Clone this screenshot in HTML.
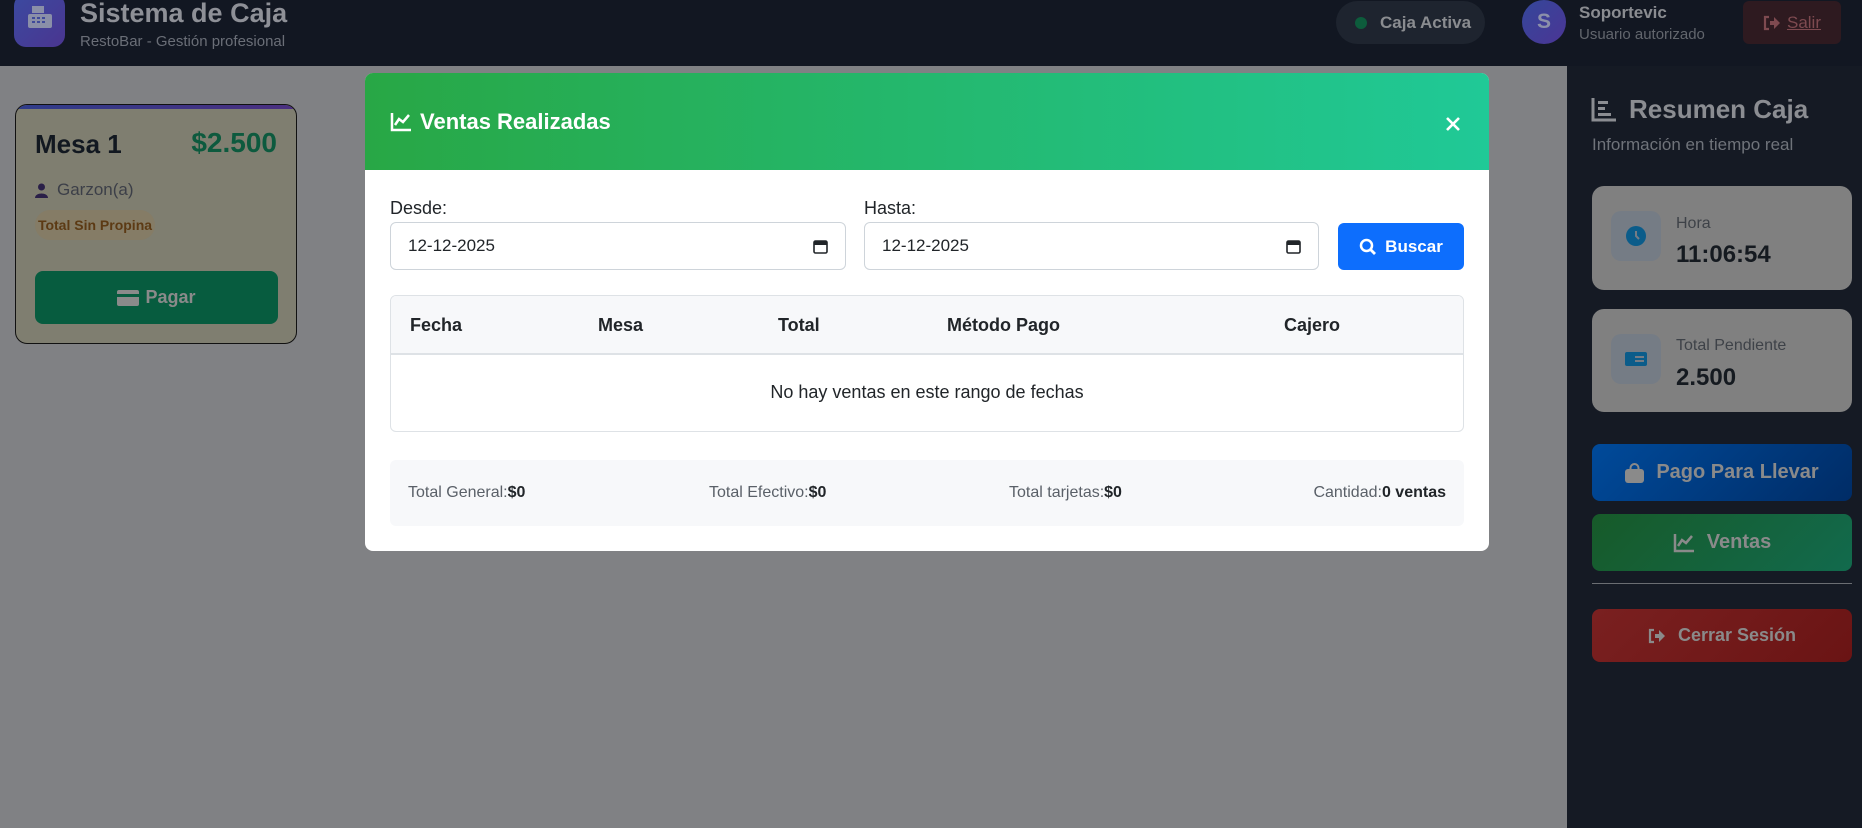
<!DOCTYPE html>
<html><head><meta charset="utf-8"><style>
*{box-sizing:border-box;margin:0;padding:0}
body{width:1862px;height:828px;overflow:hidden;background:#808184;font-family:"Liberation Sans",sans-serif;position:relative}
.abs{position:absolute}
.hdr{left:0;top:0;width:1862px;height:66px;background:#121722}
.logo{left:14px;top:-6px;width:51px;height:53px;border-radius:12px;background:linear-gradient(135deg,#3b4aa0,#4a3590)}
.side{left:1567px;top:66px;width:295px;height:762px;background:#151a24}
.card{border-radius:12px}
.btn{border-radius:8px;color:#8a8a8a;font-weight:bold;font-size:20px;display:flex;align-items:center;justify-content:center;gap:12px}
.modal{left:365px;top:73px;width:1124px;height:478px;background:#fff;border-radius:8px;overflow:hidden}
.mh{height:97px;background:linear-gradient(90deg,#28a745,#20c997);color:#fff}
.inp{border:1px solid #ced4da;border-radius:6px;height:48px;font-size:17px;color:#212529;padding-left:17px;display:flex;align-items:center}
</style></head><body>
<div class="abs hdr"></div>
<div class="abs logo"><svg width="51" height="53" viewBox="0 0 51 53"><rect x="14" y="20" width="24" height="14" rx="2" fill="#8a8fa8"/><rect x="18" y="12" width="12" height="7" fill="#8a8fa8"/><g fill="#3f4a9a"><rect x="18" y="23" width="3" height="2"/><rect x="23" y="23" width="3" height="2"/><rect x="28" y="23" width="3" height="2"/><rect x="18" y="27" width="3" height="2"/><rect x="23" y="27" width="3" height="2"/><rect x="28" y="27" width="3" height="2"/></g></svg></div>
<div class="abs" style="left:80px;top:-2px;font-size:27px;font-weight:bold;color:#8e9097">Sistema de Caja</div>
<div class="abs" style="left:80px;top:33px;font-size:15px;color:#6a6e77">RestoBar - Gestión profesional</div>
<div class="abs" style="left:1336px;top:1px;width:149px;height:43px;border-radius:22px;background:#1e242f;color:#8a8c90;font-weight:bold;font-size:17px;display:flex;align-items:center;padding-left:19px;gap:13px"><span style="width:12px;height:12px;border-radius:50%;background:#0d5c3c"></span>Caja Activa</div>
<div class="abs" style="left:1522px;top:0px;width:44px;height:44px;border-radius:50%;background:linear-gradient(135deg,#34479a,#4b3595);color:#8b90aa;font-weight:bold;font-size:21px;display:flex;align-items:center;justify-content:center">S</div>
<div class="abs" style="left:1579px;top:3px;font-size:17px;font-weight:bold;color:#8a8c91">Soportevic</div>
<div class="abs" style="left:1579px;top:26px;font-size:15px;color:#62666d">Usuario autorizado</div>
<div class="abs" style="left:1743px;top:1px;width:98px;height:43px;border-radius:6px;background:#2e1a20;color:#7e4a50;font-size:17px;display:flex;align-items:center;justify-content:center;gap:6px"><svg width="18" height="16" viewBox="0 0 18 16"><path d="M6 2H2V14H6" stroke="#7e4a50" stroke-width="2.2" fill="none"/><path d="M7 6H11V2L17 8L11 14V10H7Z" fill="#7e4a50"/></svg><u>Salir</u></div>

<!-- mesa card -->
<div class="abs card" style="left:15px;top:104px;width:282px;height:240px;background:#7f7e70;border:1.5px solid #111;overflow:hidden">
<div style="height:4px;background:linear-gradient(90deg,#2f3c8a,#4b2f80)"></div>
<div class="abs" style="left:19px;top:24px;font-size:26px;font-weight:bold;color:#121820">Mesa 1</div>
<div class="abs" style="right:19px;top:22px;font-size:28px;font-weight:bold;color:#0d5a3e">$2.500</div>
<div class="abs" style="left:19px;top:75px;font-size:17px;color:#3c3f48;display:flex;align-items:center;gap:9px"><svg width="13" height="15" viewBox="0 0 13 15"><circle cx="6.5" cy="4" r="3.5" fill="#2a1f48"/><path d="M0 15C0 9 13 9 13 15Z" fill="#2a1f48"/></svg>Garzon(a)</div>
<div class="abs" style="left:19px;top:105px;width:120px;height:30px;border-radius:15px;background:#857c66;color:#5c3a14;font-size:14px;font-weight:bold;display:flex;align-items:center;justify-content:center">Total Sin Propina</div>
<div class="abs btn" style="left:19px;top:166px;width:243px;height:53px;background:#075c3f;font-size:18px;gap:6px"><svg width="22" height="16" viewBox="0 0 22 16"><rect width="22" height="16" rx="2" fill="#8a8a8a"/><rect y="4" width="22" height="3" fill="#075c3f"/></svg>Pagar</div>
</div>

<!-- sidebar -->
<div class="abs side"></div>
<div class="abs" style="left:1591px;top:94px;font-size:26px;font-weight:bold;color:#8b8d92;display:flex;align-items:center;gap:12px"><svg width="26" height="24" viewBox="0 0 26 24"><path d="M2 0V22H25" stroke="#8b8d92" stroke-width="3" fill="none"/><rect x="7" y="3" width="10" height="3" fill="#8b8d92"/><rect x="7" y="9" width="7" height="3" fill="#8b8d92"/><rect x="7" y="15" width="13" height="3" fill="#8b8d92"/></svg>Resumen Caja</div>
<div class="abs" style="left:1592px;top:135px;font-size:17px;color:#6f737a">Información en tiempo real</div>
<div class="abs card" style="left:1592px;top:186px;width:260px;height:104px;background:#808080"></div>
<div class="abs" style="left:1611px;top:211px;width:50px;height:50px;border-radius:10px;background:#757c85"><svg style="margin:15px" width="20" height="20" viewBox="0 0 20 20"><circle cx="10" cy="10" r="10" fill="#0b5c8a"/><path d="M10 5V10L13 13" stroke="#757c85" stroke-width="2" fill="none"/></svg></div>
<div class="abs" style="left:1676px;top:215px;font-size:16px;color:#3e4248">Hora</div>
<div class="abs" style="left:1676px;top:241px;font-size:24px;font-weight:bold;color:#151a20">11:06:54</div>
<div class="abs card" style="left:1592px;top:309px;width:260px;height:103px;background:#808080"></div>
<div class="abs" style="left:1611px;top:334px;width:50px;height:50px;border-radius:10px;background:#757c85"><svg style="margin:18px 14px" width="22" height="14" viewBox="0 0 22 14"><rect width="22" height="14" rx="2" fill="#0b5c8a"/><rect x="10" y="4" width="9" height="2" fill="#757c85"/><rect x="10" y="8" width="9" height="2" fill="#757c85"/></svg></div>
<div class="abs" style="left:1676px;top:337px;font-size:16px;color:#3e4248">Total Pendiente</div>
<div class="abs" style="left:1676px;top:364px;font-size:24px;font-weight:bold;color:#151a20">2.500</div>
<div class="abs btn" style="left:1592px;top:444px;width:260px;height:57px;background:linear-gradient(135deg,#004a9a,#002c66)"><svg width="19" height="20" viewBox="0 0 19 20"><path d="M5.5 7V5A4 4 0 0 1 13.5 5V7" stroke="#8a8a8a" stroke-width="2" fill="none"/><rect y="6" width="19" height="14" rx="3" fill="#8a8a8a"/></svg>Pago Para Llevar</div>
<div class="abs btn" style="left:1592px;top:514px;width:260px;height:57px;background:linear-gradient(135deg,#175a29,#126a4d)"><svg width="22" height="20" viewBox="0 0 22 20"><path d="M2 1V18H21" stroke="#8a8a8a" stroke-width="2.5" fill="none"/><path d="M5 13L9 7L13 10L19 3" stroke="#8a8a8a" stroke-width="2.5" fill="none"/></svg>Ventas</div>
<div class="abs" style="left:1592px;top:583px;width:260px;height:1px;background:#6a6d72"></div>
<div class="abs btn" style="left:1592px;top:609px;width:260px;height:53px;background:linear-gradient(135deg,#7a2020,#6a1414);font-size:18px"><svg width="18" height="16" viewBox="0 0 18 16"><path d="M6 2H2V14H6" stroke="#8a8a8a" stroke-width="2.2" fill="none"/><path d="M7 6H11V2L17 8L11 14V10H7Z" fill="#8a8a8a"/></svg>Cerrar Sesión</div>

<!-- modal -->
<div class="abs modal">
<div class="mh" style="position:relative">
<div class="abs" style="left:25px;top:36px;font-size:22px;font-weight:bold;display:flex;gap:8px;align-items:center"><svg width="22" height="20" viewBox="0 0 22 20"><path d="M2 1V18H21" stroke="#fff" stroke-width="2.5" fill="none"/><path d="M5 13L9 7L13 10L19 3" stroke="#fff" stroke-width="2.5" fill="none"/></svg>Ventas Realizadas</div>
<svg class="abs" style="left:1080px;top:43px" width="16" height="16" viewBox="0 0 16 16"><path d="M2 2L14 14M14 2L2 14" stroke="#fff" stroke-width="2.6"/></svg>
</div>
<div class="abs" style="left:25px;top:125px;font-size:18px;color:#212529">Desde:</div>
<div class="abs inp" style="left:25px;top:149px;width:456px">12-12-2025<svg style="position:absolute;right:17px" width="15" height="15" viewBox="0 0 15 15"><rect x="1" y="2" width="13" height="12" rx="1.5" stroke="#212529" stroke-width="1.6" fill="none"/><rect x="1" y="2" width="13" height="4" fill="#212529"/></svg></div>
<div class="abs" style="left:499px;top:125px;font-size:18px;color:#212529">Hasta:</div>
<div class="abs inp" style="left:499px;top:149px;width:455px">12-12-2025<svg style="position:absolute;right:17px" width="15" height="15" viewBox="0 0 15 15"><rect x="1" y="2" width="13" height="12" rx="1.5" stroke="#212529" stroke-width="1.6" fill="none"/><rect x="1" y="2" width="13" height="4" fill="#212529"/></svg></div>
<div class="abs" style="left:973px;top:150px;width:126px;height:47px;border-radius:6px;background:#0d6efd;color:#fff;font-weight:bold;font-size:17px;display:flex;align-items:center;justify-content:center;gap:8px"><svg width="18" height="18" viewBox="0 0 18 18"><circle cx="7.5" cy="7.5" r="5.5" stroke="#fff" stroke-width="2.5" fill="none"/><path d="M11.5 11.5L16 16" stroke="#fff" stroke-width="2.8"/></svg>Buscar</div>
<div class="abs" style="left:25px;top:222px;width:1074px;height:137px;border:1px solid #dee2e6;border-radius:6px;overflow:hidden">
<div style="height:59px;background:#f7f8fa;border-bottom:2px solid #dee2e6;position:relative;font-size:18px;font-weight:bold;color:#212529">
<span class="abs" style="left:19px;top:19px">Fecha</span><span class="abs" style="left:207px;top:19px">Mesa</span><span class="abs" style="left:387px;top:19px">Total</span><span class="abs" style="left:556px;top:19px">Método Pago</span><span class="abs" style="left:893px;top:19px">Cajero</span></div>
<div style="text-align:center;padding-top:27px;font-size:18px;color:#212529">No hay ventas en este rango de fechas</div>
</div>
<div class="abs" style="left:25px;top:387px;width:1074px;height:66px;background:#f7f8fa;border-radius:6px;font-size:16px;color:#5a6068">
<span class="abs" style="left:18px;top:24px">Total General:<b style="color:#212529">$0</b></span>
<span class="abs" style="left:319px;top:24px">Total Efectivo:<b style="color:#212529">$0</b></span>
<span class="abs" style="left:619px;top:24px">Total tarjetas:<b style="color:#212529">$0</b></span>
<span class="abs" style="right:18px;top:24px">Cantidad:<b style="color:#212529">0 ventas</b></span>
</div>
</div>
</body></html>
